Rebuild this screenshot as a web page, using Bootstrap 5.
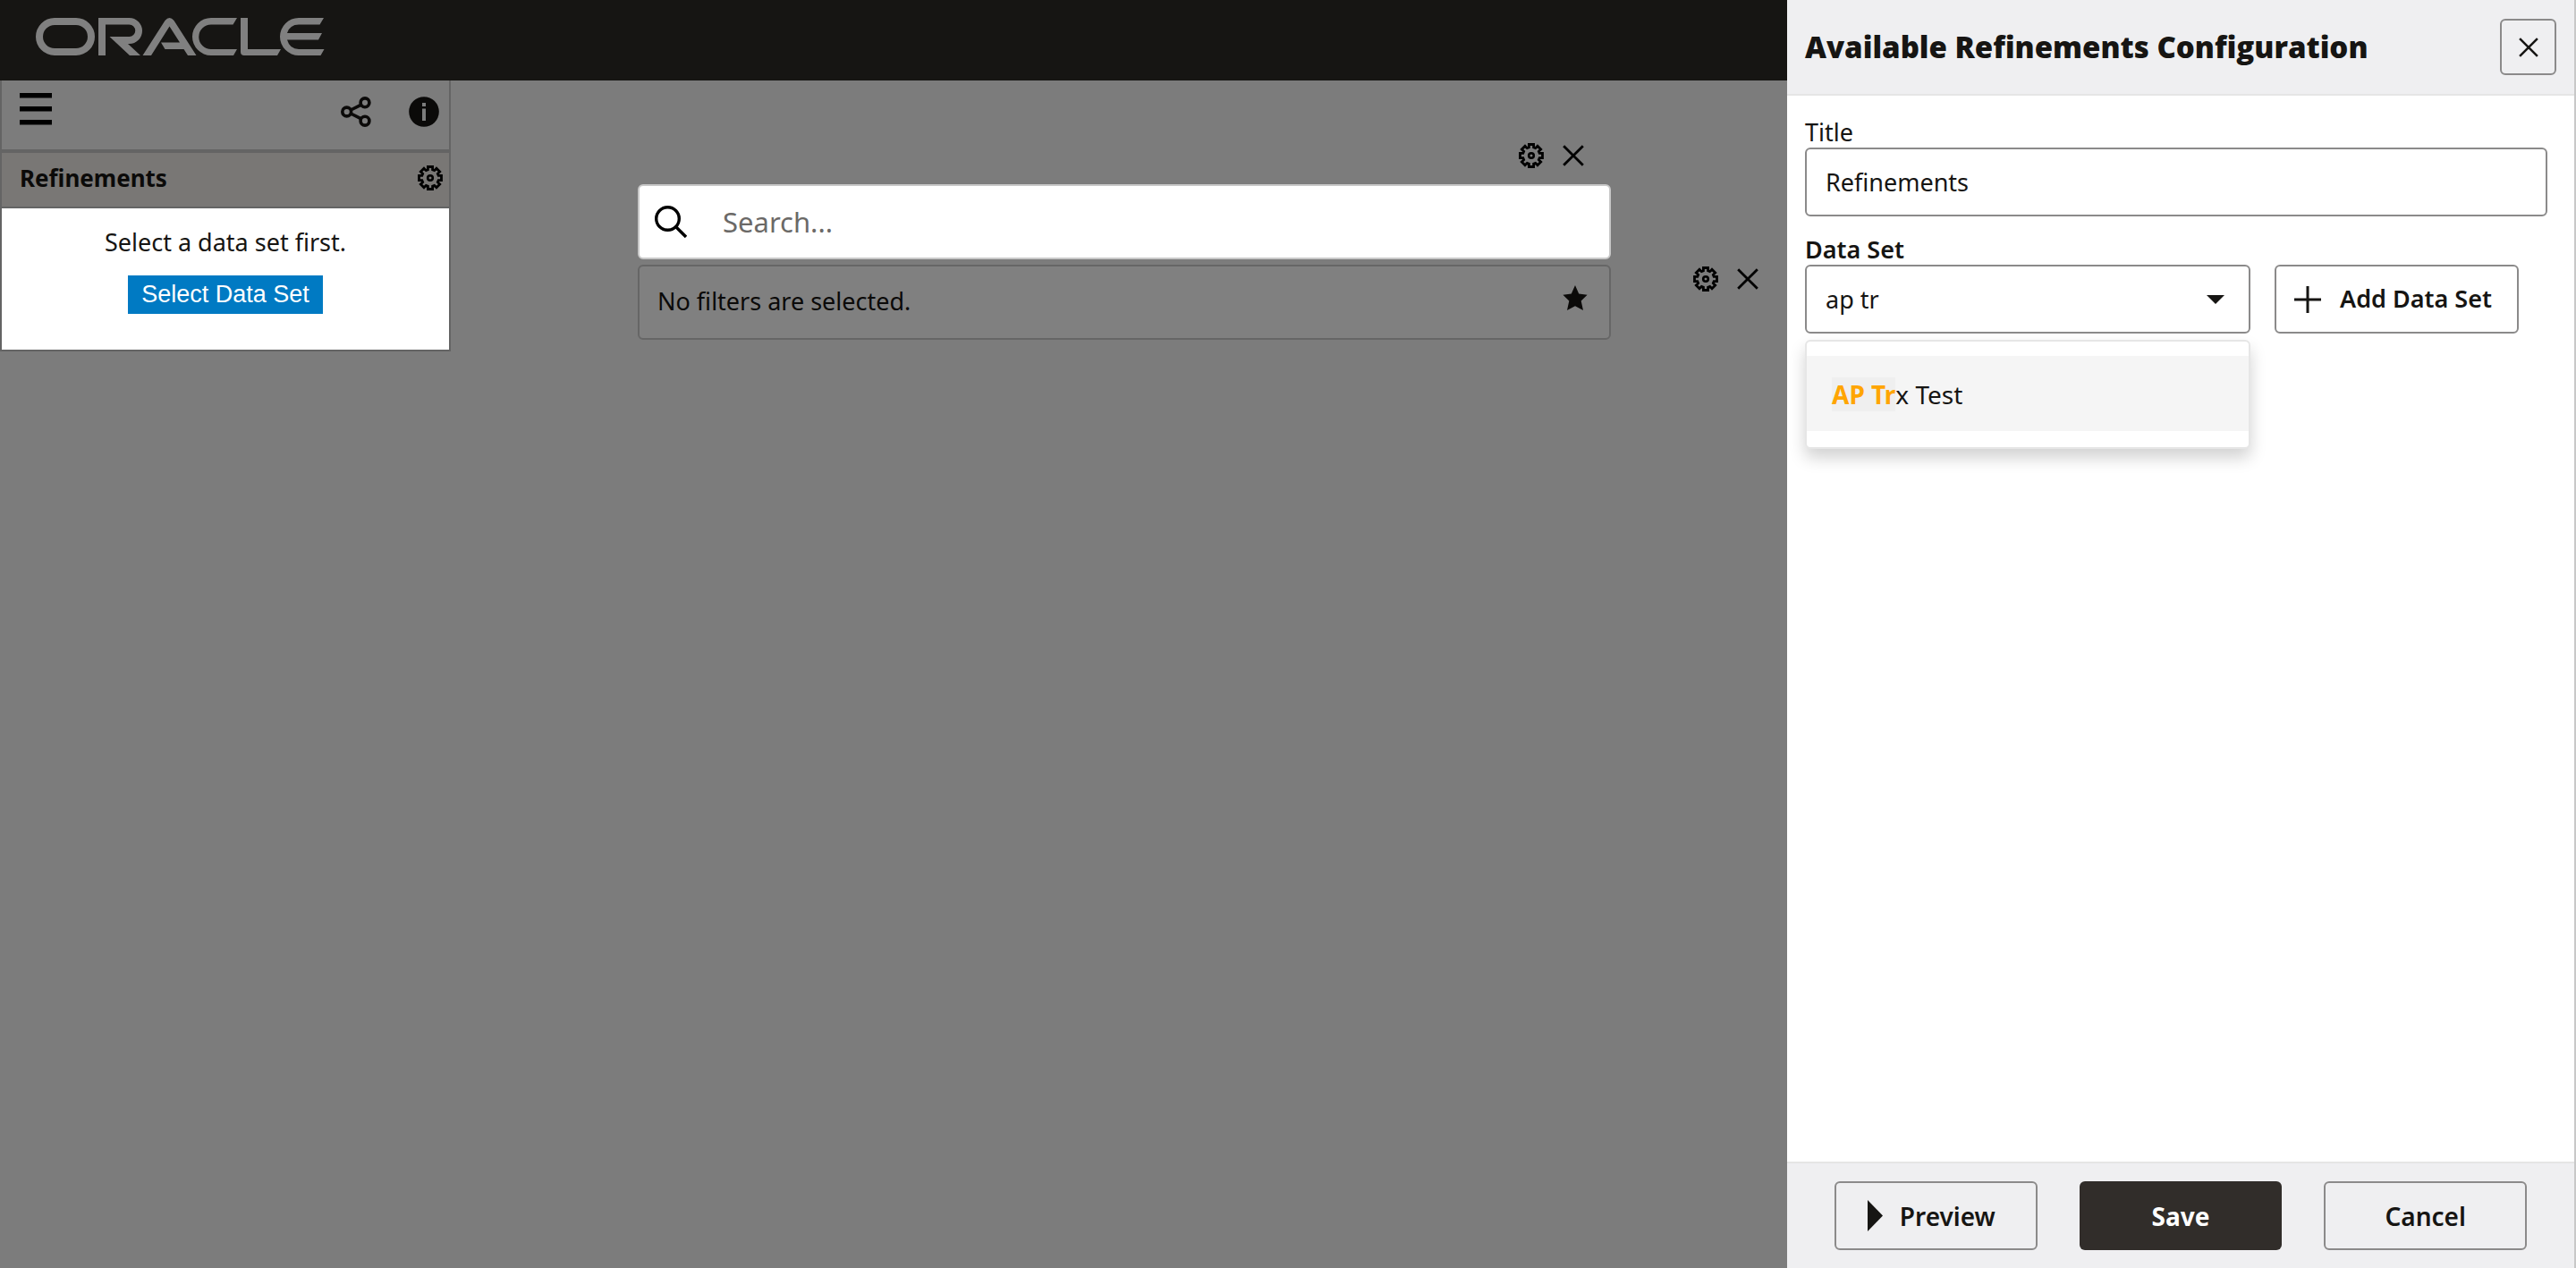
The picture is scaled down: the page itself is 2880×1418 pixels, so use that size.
<!DOCTYPE html>
<html lang="en">
<head>
<meta charset="utf-8">
<meta name="viewport" content="width=device-width, initial-scale=1">
<title>Available Refinements Configuration</title>
<link href="https://cdn.jsdelivr.net/npm/bootstrap@5.3.0/dist/css/bootstrap.min.css" rel="stylesheet">
<script src="https://cdn.jsdelivr.net/npm/bootstrap@5.3.0/dist/js/bootstrap.bundle.min.js"></script>
<style>
  :root { --panel-width: 882px; --ink: #161513; --dim-line: #646464; --field-line: #8b8a8a; }
  body { font-family: "Noto Sans", sans-serif; font-size: 27px; line-height: 36px; color: var(--ink); background: #7c7c7c; }
  svg { display: block; }
  .topbar { height: 90px; background: #161513; padding: 0 40px; }
  .icon-btn { background: none; border: 0; padding: 0; color: #000; }

  .side { width: 504px; border: 2px solid var(--dim-line); border-top: 0; }
  .side-tools { height: 81px; padding: 14px 11px 0 20px; gap: 42px; border-bottom: 4px solid var(--dim-line); }
  .side-title { height: 62px; padding: 0 7px 4px 20px; background: #797775; border-bottom: 2px solid var(--dim-line); color: #0b0a09; }
  .side-title h2 { font-size: 26px; line-height: 36px; font-weight: 700; }
  .side-body { padding: 20px 0 40px; }
  .side-body p { margin-bottom: 19px; }
  .pick-btn { display: block; margin: 0 auto; background: #007ac3; color: #fff; border: 0; font-family: "Liberation Sans", sans-serif; font-size: 27px; line-height: 30px; padding: 6px 15px 7px; }

  .canvas { padding-left: 209px; padding-right: var(--panel-width); }
  .tool-pair { gap: 21px; }
  .search-tools { height: 116px; padding: 52px 30px 0 0; }
  .gutter { width: 197px; }
  .field-tall { height: 84px; border: 2px solid #c8c8c8; border-radius: 6px; }
  .search-box { background: #fff; padding: 0 17px; gap: 38px; }
  .search-box input { border: 0; outline: 0; font-size: 31px; color: var(--ink); background: transparent; }
  .search-box input::placeholder { color: #6b6967; opacity: 1; }
  .filter-line { margin-top: 6px; }
  .filter-box { background: #808080; border-color: #666; color: #0b0a09; padding: 0 24px 2px 20px; }
  .filter-box .icon-btn { margin-bottom: 8px; }
  .side-pair { padding: 2px 32px 0 0; }

  .panel.offcanvas { --bs-offcanvas-width: var(--panel-width); --bs-offcanvas-bg: #fff; color: var(--ink); border: 0; border-right: 2px solid #c8c8c8; outline: 0; }
  .panel-head { height: 107px; padding: 0 20px; background: #efeff1; border-bottom: 2px solid #e5e5e5; }
  .panel-head h1 { font-family: "Open Sans", "Noto Sans", sans-serif; font-size: 33px; line-height: 44px; font-weight: 800; }
  .close-btn { width: 63px; height: 63px; }
  .panel-body { padding: 24px 30px 0 20px; }
  .line-btn, .line-btn:hover { border: 2px solid var(--field-line); border-radius: 6px; background: transparent; color: var(--ink); font-weight: 600; padding: 0; }
  .fill-btn { border: 0; border-radius: 6px; background: #312d2a; color: #fff; font-weight: 700; padding: 0; }
  .field { height: 77px; border: 2px solid var(--field-line); border-radius: 6px; padding: 0 21px; font-size: 27px; color: var(--ink); }
  .field-label { display: block; line-height: 34px; }
  .field + .field-label { margin-top: 20px; }
  .data-line { gap: 27px; }
  .combo { flex: 0 1 498px; }
  .combo .field { padding: 0 27px 0 21px; }
  .combo input { border: 0; outline: 0; padding: 0; font-size: 27px; color: var(--ink); min-width: 0; }
  .combo-list { top: 84px; padding: 16px 0 18px; background: #fff; border: 2px solid #e6e6e6; border-radius: 6px; box-shadow: 0 10px 18px rgba(0,0,0,.18); }
  .combo-item { height: 84px; padding: 2px 28px 0; background: #f5f5f5; font-size: 28px; }
  .hit { color: orange; background: #efefef; font-weight: 700; }
  .add-btn { height: 77px; width: 273px; padding-left: 20px !important; gap: 21px; font-size: 27px; }
  .panel-foot { grid-template-columns: repeat(3, 1fr); height: 119px; padding: 20px 53px; gap: 47px; background: #efeff1; border-top: 2px solid #e5e5e5; }
  .panel-foot .btn { height: 77px; font-size: 28px; }
  .preview-btn { gap: 19px; padding-right: 10px !important; }
</style>
</head>
<body class="vh-100 d-flex flex-column overflow-hidden">

<svg width="0" height="0" class="position-absolute" aria-hidden="true">
  <symbol id="gear" viewBox="-14 -14 28 28">
    <path fill="none" stroke="currentColor" stroke-width="2.8" d="M-2.6-9.2V-12.5H2.6V-9.2L4.67-8.34L7-10.68L10.68-7L8.34-4.67L9.2-2.6H12.5V2.6H9.2L8.34 4.67L10.68 7L7 10.68L4.67 8.34L2.6 9.2V12.5H-2.6V9.2L-4.67 8.34L-7 10.68L-10.68 7L-8.34 4.67L-9.2 2.6H-12.5V-2.6H-9.2L-8.34-4.67L-10.68-7L-7-10.68L-4.67-8.34Z"/>
    <circle r="2.8" fill="none" stroke="currentColor" stroke-width="2.6"/>
  </symbol>
  <symbol id="cross" viewBox="0 0 24 24">
    <path fill="none" stroke="currentColor" stroke-width="2.8" d="M1.2 1.2 22.8 22.8M22.8 1.2 1.2 22.8"/>
  </symbol>
</svg>

<header class="topbar d-flex flex-shrink-0">
  <svg class="mt-3" width="324" height="52" viewBox="40 16 324 52" fill="#808080" role="img" aria-label="Oracle">
    <rect x="44" y="24" width="58" height="34" rx="17" fill="none" stroke="#808080" stroke-width="8"/>
    <path d="M110 62V20H144.500A14.500 14.500 0 0 1 144.500 49H143L157 62H145L122.500 41H144.500A6.750 6.750 0 0 0 144.500 27.500H118V62Z"/>
    <path d="M159.500 62 184.500 23Q189.500 17 194.500 23L219.500 62H210L205.500 55H184.500L180 47.500H201L189.500 29.500 169 62Z"/>
    <path d="M265 20H236A21 21 0 0 0 236 62H261L265 55H236A13.750 13.750 0 0 1 236 27.500H260.500Z"/>
    <path d="M269 20H277V55H314L310 62H273Q269 62 269 58Z"/>
    <path d="M362 20H334A21 21 0 0 0 334 62H358.500L362.500 55H334Q324 55 321 44.500H356L360 37H321Q324 27.500 334 27.500H357.500Z"/>
  </svg>
</header>

<div class="d-flex align-items-start flex-grow-1">
  <aside class="side flex-shrink-0">
    <div class="side-tools d-flex align-items-start">
      <button class="icon-btn me-auto" aria-label="Menu"><svg width="36" height="36" viewBox="0 0 36 36" fill="currentColor"><path d="M0 0H36V5.500H0ZM0 15H36V20.500H0ZM0 30H36V35.500H0Z"/></svg></button>
      <button class="icon-btn mt-1" aria-label="Share"><svg width="34" height="34" viewBox="0 0 34 34" fill="none" stroke="#0b0a09" stroke-width="3.600"><circle cx="6.700" cy="17" r="4.900"/><circle cx="27" cy="6.800" r="4.900"/><circle cx="27" cy="27.200" r="4.900"/><path d="M11.200 15 22.400 9.300M11.200 19 22.400 24.700"/></svg></button>
      <button class="icon-btn mt-1" aria-label="Information"><svg width="34" height="34" viewBox="0 0 34 34"><circle cx="17" cy="17" r="16.800" fill="#0b0a09"/><path fill="#7c7c7c" d="M15 7h4v4h-4zM15 13.500h4V27h-4z"/></svg></button>
    </div>
    <div class="side-title d-flex align-items-center justify-content-between">
      <h2 class="mb-0">Refinements</h2>
      <button class="icon-btn" aria-label="Configure refinements"><svg width="28" height="28"><use href="#gear"/></svg></button>
    </div>
    <div class="side-body bg-white text-center">
      <p>Select a data set first.</p>
      <button class="pick-btn">Select Data Set</button>
    </div>
  </aside>

  <main class="canvas flex-grow-1">
    <div class="d-flex">
      <div class="flex-grow-1">
        <div class="search-tools tool-pair d-flex justify-content-end align-items-center">
          <button class="icon-btn" aria-label="Configure search"><svg width="28" height="28"><use href="#gear"/></svg></button>
          <button class="icon-btn" aria-label="Remove search"><svg width="24" height="24"><use href="#cross"/></svg></button>
        </div>
        <div class="search-box field-tall d-flex align-items-center">
          <svg class="flex-shrink-0" width="36" height="36" viewBox="0 0 36 36" fill="none" stroke="#000" stroke-width="3.400"><circle cx="14.500" cy="14.500" r="12.800"/><path d="M23.500 23.500 35 35"/></svg>
          <input class="w-100" type="search" placeholder="Search..." aria-label="Search">
        </div>
      </div>
      <div class="gutter flex-shrink-0"></div>
    </div>
    <div class="filter-line d-flex">
      <div class="filter-box field-tall flex-grow-1 d-flex align-items-center justify-content-between">
        <span>No filters are selected.</span>
        <button class="icon-btn" aria-label="Saved filters"><svg width="28" height="28" viewBox="0 0 28 28" fill="#0b0a09"><path d="M14 0 18.200 9.600 27.600 10.700 20.700 17.500 23 28 14 23.200 5 28 7.300 17.500.4 10.700 9.800 9.600Z"/></svg></button>
      </div>
      <div class="gutter side-pair tool-pair flex-shrink-0 d-flex justify-content-end align-items-start">
        <button class="icon-btn" aria-label="Configure filters"><svg width="28" height="28"><use href="#gear"/></svg></button>
        <button class="icon-btn" aria-label="Remove filters"><svg width="24" height="28" viewBox="0 -2 24 28"><use href="#cross" width="24" height="24"/></svg></button>
      </div>
    </div>
  </main>
</div>

<section class="panel offcanvas offcanvas-end show" tabindex="-1" data-bs-backdrop="false" data-bs-scroll="true" aria-labelledby="panelTitle">
  <div class="panel-head d-flex align-items-center justify-content-between">
    <h1 id="panelTitle" class="mb-0">Available Refinements Configuration</h1>
    <button class="btn line-btn close-btn d-flex align-items-center justify-content-center" aria-label="Close"><svg width="22" height="22"><use href="#cross"/></svg></button>
  </div>
  <div class="panel-body flex-grow-1">
    <label class="field-label" for="title">Title</label>
    <input id="title" class="field w-100 d-block" type="text" value="Refinements">
    <label class="field-label fw-semibold" for="dataset">Data Set</label>
    <div class="data-line d-flex">
      <div class="combo position-relative">
        <div class="field d-flex align-items-center">
          <input id="dataset" class="flex-grow-1" type="text" role="combobox" aria-expanded="true" aria-controls="datasetList" value="ap tr">
          <svg width="20" height="10" viewBox="0 0 20 10" fill="#161513"><path d="M0 0H20L10 10Z"/></svg>
        </div>
        <div id="datasetList" class="combo-list position-absolute start-0 w-100" role="listbox">
          <div class="combo-item d-flex align-items-center" role="option" aria-selected="true"><span><span class="hit">AP Tr</span>x Test</span></div>
        </div>
      </div>
      <button class="btn line-btn add-btn d-flex align-items-center"><svg width="30" height="30" viewBox="0 0 30 30" stroke="#161513" stroke-width="3"><path d="M15 0V30M0 15H30"/></svg>Add Data Set</button>
    </div>
  </div>
  <div class="panel-foot d-grid">
    <button class="btn line-btn preview-btn d-flex align-items-center justify-content-center"><svg width="17" height="35" viewBox="0 0 17 35" fill="#161513"><path d="M0 0 17 17.500 0 35Z"/></svg>Preview</button>
    <button class="btn fill-btn">Save</button>
    <button class="btn line-btn">Cancel</button>
  </div>
</section>
</body>
</html>
